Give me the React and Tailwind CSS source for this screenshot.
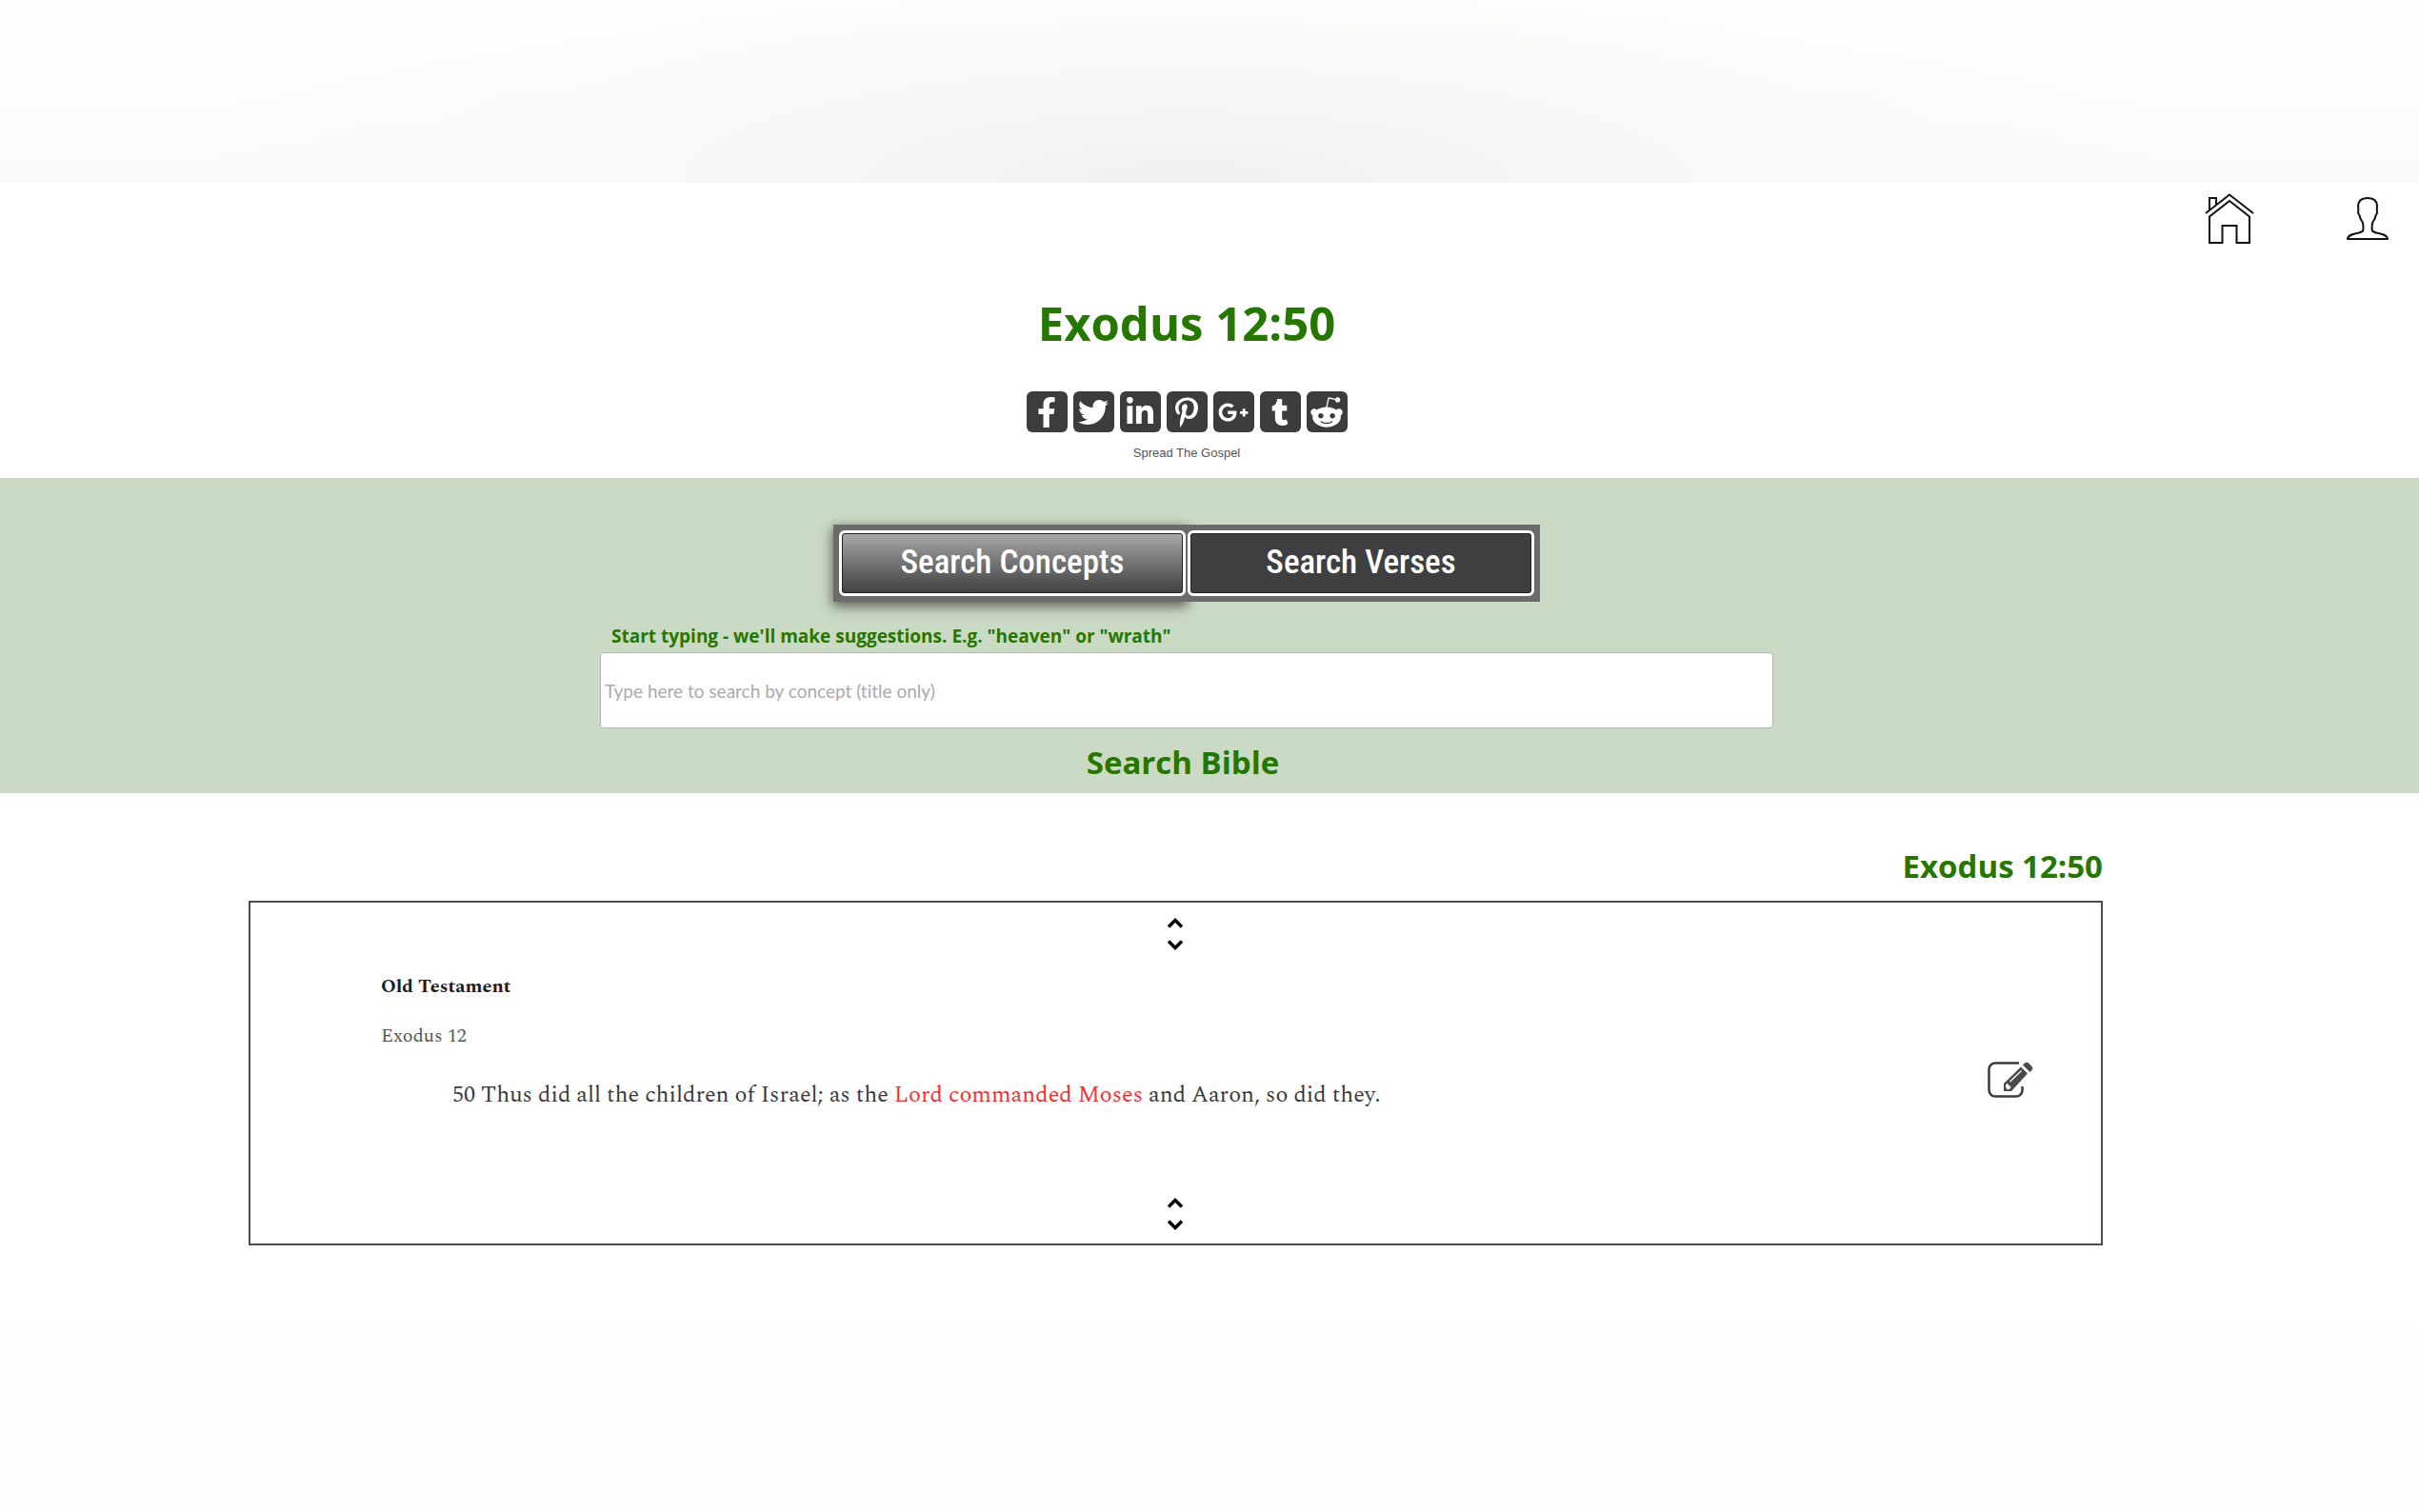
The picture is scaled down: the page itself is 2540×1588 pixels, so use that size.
import React, { useState } from 'react';
import {
  FaFacebookF,
  FaTwitter,
  FaLinkedinIn,
  FaPinterestP,
  FaGooglePlusG,
  FaTumblr,
  FaRedditAlien,
} from 'react-icons/fa';

const SHARE_LINKS = [
  { name: 'Facebook', Icon: FaFacebookF, size: 'size-8' },
  { name: 'Twitter', Icon: FaTwitter, size: 'size-8' },
  { name: 'LinkedIn', Icon: FaLinkedinIn, size: 'size-8' },
  { name: 'Pinterest', Icon: FaPinterestP, size: 'size-8' },
  { name: 'Google Plus', Icon: FaGooglePlusG, size: 'size-8' },
  { name: 'Tumblr', Icon: FaTumblr, size: 'size-7' },
  { name: 'Reddit', Icon: FaRedditAlien, size: 'size-9' },
];

const TABS = [
  { id: 'concepts', label: 'Search Concepts' },
  { id: 'verses', label: 'Search Verses' },
];

function HomeIcon() {
  return (
    <svg viewBox="0 0 52 53" className="w-[52px] h-[53px]" fill="none" stroke="#111" strokeWidth="2" aria-hidden="true">
      <path d="M1 21 26 1.500 51 21" />
      <path d="M5 17.500V5h7v7" />
      <path d="M5 52V24.500L26 8l21 16.500V52H33.500V34h-15v18z" />
    </svg>
  );
}

function UserIcon() {
  return (
    <svg viewBox="0 0 44 45" className="w-11 h-[45px]" fill="none" stroke="#111" strokeWidth="2" strokeLinejoin="round" aria-hidden="true">
      <path d="M22 1c7.500 0 10 4 10 9l-.3 4c.8 2-.2 4-1 5-.7 4-2.200 5.500-3.400 7.500-.8 3-.8 6.500-.4 9 3.200 3.500 15.200 1.500 16.200 8.500H1c1-7 13-5 16.200-8.500.4-2.500.4-6-.4-9-1.200-2-2.700-3.500-3.400-7.500-.8-1-1.800-3-1-5l-.3-4c0-5 2.500-9 9.900-9z" />
    </svg>
  );
}

function EditIcon() {
  return (
    <svg viewBox="0 0 48 38" className="w-12 h-[38px]" aria-hidden="true">
      <path d="M33 1.500H8A6.500 6.500 0 0 0 1.500 8v22A6.500 6.500 0 0 0 8 36.500h22a6.500 6.500 0 0 0 6.500-6.500v-4" fill="none" stroke="#3c3c3e" strokeWidth="2.500" />
      <path d="M17 23 35 5.500l7 7L25 31h-8z" fill="#4a4a4c" />
      <path d="M37 3.500l2-2c1-1 3-1 4 0l3.500 3.500c1 1 1 3 0 4l-2 2z" fill="#4a4a4c" />
      <path d="M23.500 21 35.500 9.500" stroke="#fff" strokeWidth="1.200" />
      <path d="M19 24l2-1 1.500 2 2 1-1 2.500-2.500 1-2-2.500z" fill="#fff" />
    </svg>
  );
}

function Scroller() {
  return (
    <div className="flex flex-col items-center gap-3 pr-0.5">
      <button aria-label="Previous verse" className="block">
        <svg viewBox="0 0 18 11" className="w-[18px] h-[11px]" fill="none" stroke="#000" strokeWidth="3.500" aria-hidden="true">
          <path d="M2 9.500 9 2.500l7 7" />
        </svg>
      </button>
      <button aria-label="Next verse" className="block">
        <svg viewBox="0 0 18 11" className="w-[18px] h-[11px]" fill="none" stroke="#000" strokeWidth="3.500" aria-hidden="true">
          <path d="M2 1.500 9 8.500l7-7" />
        </svg>
      </button>
    </div>
  );
}

export default function App() {
  const [tab, setTab] = useState('concepts');

  return (
    <div className="min-h-screen flex flex-col bg-[#fefefe] font-['Open_Sans',sans-serif] text-[#333]">

      {/* Top shade */}
      <div className="h-48 bg-[radial-gradient(50%_150%_at_49%_100%,#f0f0ef_0%,#f4f4f3_20%,#f9f9f8_45%,transparent_85%),linear-gradient(#fefefe,#fafbf9)]" />

      {/* Header */}
      <header className="bg-white pb-4">
        <nav aria-label="Account" className="flex justify-end gap-[97px] pt-[11px] pr-8">
          <a href="#home" aria-label="Home"><HomeIcon /></a>
          <a href="#account" aria-label="Account" className="pt-1"><UserIcon /></a>
        </nav>
        <div className="flex flex-col items-center pr-12 pt-[51px]">
          <h1 className="text-[49px] leading-[64px] font-bold text-[#257700]">Exodus 12:50</h1>
          <ul className="flex gap-1.5 mt-10">
            {SHARE_LINKS.map(({ name, Icon, size }) => (
              <li key={name}>
                <a href="#share" aria-label={name} className="flex size-[43px] items-center justify-center rounded-md bg-[#3c3c3e] text-white">
                  <Icon className={size} aria-hidden="true" />
                </a>
              </li>
            ))}
          </ul>
          <p className="mt-3 text-[13px] leading-5 font-['Liberation_Sans',sans-serif] text-[#555]">Spread The Gospel</p>
        </div>
      </header>

      {/* Search */}
      <section aria-label="Search" className="flex flex-col items-center bg-[#cbdac5] pt-[49px] pr-12 pb-2.5">
        <div className="flex">
          {TABS.map(({ id, label }) => (
            <div key={id} className={`bg-[#6b6b6b] py-1.5 first:pr-px first:pl-1.5 last:pr-1.5 last:pl-px ${tab === id ? 'shadow-[0_4px_12px_1px_rgba(0,0,0,0.55)]' : ''}`}>
              <button
                onClick={() => setTab(id)}
                aria-pressed={tab === id}
                className={`h-[69px] w-[364px] rounded-md border-3 border-white pb-0.5 text-[35px] leading-10 font-medium text-white inset-shadow-[0_0_0_1px_#222] font-['Roboto_Condensed',Roboto,sans-serif] ${tab === id ? 'bg-linear-to-b from-[#aaa] to-[#404042]' : 'bg-[#3f3f41]'}`}
              >
                {label}
              </button>
            </div>
          ))}
        </div>
        <div className="mt-[22px] flex w-full max-w-[1232px] flex-col gap-[3px]">
          <label htmlFor="concept" className="pl-3 text-[19px] leading-7 font-bold text-[#257700]">
            Start typing - we'll make suggestions. E.g. "heaven" or "wrath"
          </label>
          <input
            id="concept"
            type="text"
            placeholder="Type here to search by concept (title only)"
            className="h-20 rounded-sm border border-[#b4b8b4] bg-white px-1 text-[19px] font-['Lato',sans-serif] [font-variant-ligatures:none] placeholder:text-[#aaa] placeholder:opacity-100"
          />
        </div>
        <button className="mt-3.5 pr-2 text-[33px] leading-[44px] font-bold text-[#257700]">Search Bible</button>
      </section>

      {/* Verse */}
      <main className="flex w-full flex-col bg-white pt-[55px] pr-[332px] pb-[90px] pl-[261px]">
        <h2 className="self-end text-[33px] leading-[44px] font-bold text-[#257700]">Exodus 12:50</h2>
        <article className="mt-3.5 flex flex-col border-2 border-[#4d4d4f] pt-4 pb-3.5 font-['Spectral','Liberation_Serif',serif]">
          <Scroller />
          <div className="flex items-end justify-between pt-3 pr-[71px] pb-[78px] pl-[137px]">
            <div>
              <h3 className="text-[20px] leading-[52px] font-bold text-[#1d1d1d]">Old Testament</h3>
              <p className="text-[20px] leading-[52px] text-[#555]">Exodus 12</p>
              <p className="pl-[75px] pt-1.5 text-[24px] leading-[60px] text-[#3a3a3a]">
                50 Thus did all the children of Israel; as the <span className="text-[#f5302f]">Lord commanded Moses</span> and Aaron, so did they.
              </p>
            </div>
            <button aria-label="Edit verse" className="mb-[27px]"><EditIcon /></button>
          </div>
          <Scroller />
        </article>
      </main>

      {/* Bottom shade */}
      <div className="flex-1 bg-[#fdfdfd]" />
    </div>
  );
}
